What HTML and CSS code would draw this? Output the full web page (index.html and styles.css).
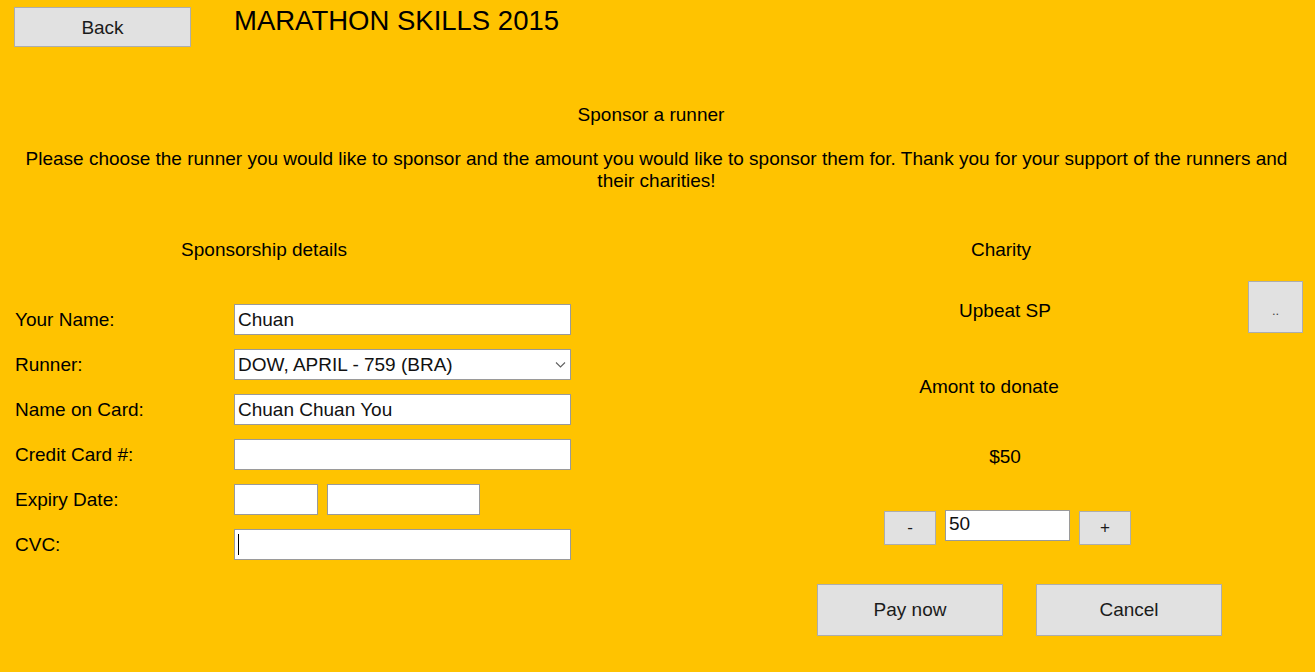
FILE: index.html
```html
<!DOCTYPE html>
<html lang="en">
<head>
<meta charset="utf-8">
<title>Marathon Skills 2015 - Sponsor a runner</title>
<link rel="stylesheet" href="styles.css">
</head>
<body>
<div class="page">
  <header class="header">
    <button class="btn btn-back" type="button">Back</button>
    <h1 class="title">MARATHON SKILLS 2015</h1>
  </header>

  <section class="intro">
    <h2 class="intro-title">Sponsor a runner</h2>
    <p class="intro-text">Please choose the runner you would like to sponsor and the amount you would like to sponsor them for. Thank you for your support of the runners and<br>their charities!</p>
  </section>

  <main class="main">
    <section class="details">
      <h3 class="section-title details-title">Sponsorship details</h3>
      <div class="form">
        <label class="form-label">Your Name:</label>
        <input class="field" type="text" value="Chuan">

        <label class="form-label">Runner:</label>
        <div class="select-wrap">
          <select class="field select">
            <option>DOW, APRIL - 759 (BRA)</option>
          </select>
          <svg class="chevron" width="11" height="6" viewBox="0 0 11 6" aria-hidden="true">
            <polyline points="1,0.5 5.5,5 10,0.5" fill="none" stroke="#606060" stroke-width="1.1"/>
          </svg>
        </div>

        <label class="form-label">Name on Card:</label>
        <input class="field" type="text" value="Chuan Chuan You">

        <label class="form-label">Credit Card #:</label>
        <input class="field" type="text" value="">

        <label class="form-label">Expiry Date:</label>
        <div class="expiry">
          <input class="field field-month" type="text" value="">
          <input class="field field-year" type="text" value="">
        </div>

        <label class="form-label">CVC:</label>
        <div class="field field-focus"><span class="caret"></span></div>
      </div>
    </section>

    <section class="charity">
      <h3 class="section-title charity-title">Charity</h3>
      <div class="charity-row">
        <span class="charity-spacer"></span>
        <span class="charity-name">Upbeat SP</span>
        <button class="btn btn-more" type="button">..</button>
      </div>
      <div class="amount-label">Amont to donate</div>
      <div class="amount-value">$50</div>
      <div class="amount-row">
        <button class="btn btn-step" type="button">-</button>
        <input class="field field-amount" type="text" value="50">
        <button class="btn btn-step" type="button">+</button>
      </div>
      <div class="actions">
        <button class="btn btn-action" type="button">Pay now</button>
        <button class="btn btn-action" type="button">Cancel</button>
      </div>
    </section>
  </main>
</div>
</body>
</html>
```

FILE: styles.css
```css
* {
  box-sizing: border-box;
}

html, body {
  margin: 0;
  padding: 0;
}

body {
  background: #ffc300;
  font-family: "Liberation Sans", Arial, sans-serif;
  font-size: 19px;
  color: #000;
}

.page {
  width: 1315px;
  height: 672px;
  overflow: hidden;
}

/* Header */
.header {
  display: flex;
  align-items: flex-start;
  padding: 7px 0 0 14px;
}

.btn {
  background: #e1e1e1;
  border: 1px solid #adadad;
  font-family: "Liberation Sans", Arial, sans-serif;
  font-size: 19px;
  color: #1b1b1b;
  padding: 0;
  margin: 0;
  border-radius: 0;
}

.btn-back {
  width: 177px;
  height: 40px;
  padding-top: 1px;
}

.title {
  margin: -1px 0 0 43px;
  font-size: 27.5px;
  font-weight: normal;
  line-height: 30px;
}

/* Intro */
.intro {
  text-align: center;
  padding: 0 4px;
}

.intro-title {
  margin: 56px 0 0;
  padding-right: 13px;
  font-size: 19px;
  font-weight: normal;
  line-height: 23px;
}

.intro-text {
  margin: 22px 0 0;
  line-height: 22px;
  padding-right: 2px;
}

/* Main two-column area */
.main {
  display: grid;
  grid-template-columns: 700px 1fr;
  margin-top: 46px;
}

.section-title {
  margin: 0;
  font-size: 19px;
  font-weight: normal;
  line-height: 23px;
  text-align: center;
}

.details-title {
  width: 528px;
}

.form {
  display: grid;
  grid-template-columns: 219px 337px;
  row-gap: 14px;
  align-items: center;
  margin-top: 43px;
  padding-left: 15px;
}

.form-label {
  line-height: 23px;
}

.field {
  display: block;
  width: 100%;
  height: 31px;
  background: #fff;
  border: 1px solid #9a9a9a;
  border-radius: 0;
  font-family: "Liberation Sans", Arial, sans-serif;
  font-size: 19px;
  color: #111;
  padding: 0 3px;
  margin: 0;
  outline: none;
}

.select-wrap {
  position: relative;
}

.select {
  appearance: none;
  -webkit-appearance: none;
  padding: 0 20px 0 3px;
}

.chevron {
  position: absolute;
  right: 5px;
  top: 13px;
  pointer-events: none;
}

.expiry {
  display: flex;
  gap: 9px;
}

.field-month {
  width: 84px;
}

.field-year {
  width: 153px;
}

.field-focus {
  position: relative;
}

.caret {
  position: absolute;
  left: 3px;
  top: 4px;
  width: 1px;
  height: 21px;
  background: #000;
}

/* Charity column */
.charity {
  display: flex;
  flex-direction: column;
}

.charity-title {
  padding-right: 13px;
}

.charity-row {
  display: grid;
  grid-template-columns: 1fr auto 1fr;
  align-items: center;
  margin-top: 20px;
  height: 52px;
}

.charity-name {
  line-height: 23px;
  padding: 6px 5px 0 0;
}

.btn-more {
  justify-self: end;
  width: 55px;
  height: 52px;
  margin-right: 12px;
  font-size: 13px;
  color: #444;
  padding-top: 6px;
}

.amount-label {
  margin-top: 42px;
  line-height: 23px;
  text-align: center;
  padding-right: 37px;
}

.amount-value {
  margin-top: 47px;
  line-height: 23px;
  text-align: center;
  padding-right: 5px;
}

.amount-row {
  display: flex;
  justify-content: center;
  align-items: flex-start;
  gap: 9px;
  margin-top: 42px;
}

.btn-step {
  width: 52px;
  height: 34px;
  margin-top: 1px;
  font-size: 17px;
}

.field-amount {
  width: 125px;
  padding-bottom: 4px;
}

.actions {
  display: flex;
  justify-content: center;
  gap: 33px;
  margin-top: 39px;
  padding-left: 24px;
}

.btn-action {
  width: 186px;
  height: 52px;
}
```
